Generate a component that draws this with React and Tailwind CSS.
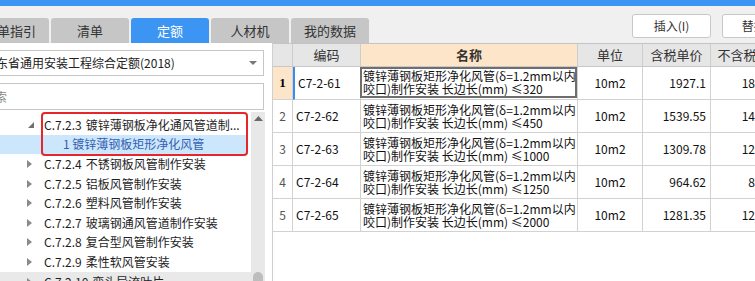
const TABS = [
  { id: 'guide', label: '清单指引' },
  { id: 'list', label: '清单' },
  { id: 'quota', label: '定额', active: true },
  { id: 'rcj', label: '人材机' },
  { id: 'mine', label: '我的数据' },
]

const TREE = [
  { code: 'C.7.2.3', name: '镀锌薄钢板净化通风管道制...', open: true },
  { child: true, name: '1 镀锌薄钢板矩形净化风管', selected: true },
  { code: 'C.7.2.4', name: '不锈钢板风管制作安装' },
  { code: 'C.7.2.5', name: '铝板风管制作安装' },
  { code: 'C.7.2.6', name: '塑料风管制作安装' },
  { code: 'C.7.2.7', name: '玻璃钢通风管道制作安装' },
  { code: 'C.7.2.8', name: '复合型风管制作安装' },
  { code: 'C.7.2.9', name: '柔性软风管安装' },
  { code: 'C.7.2.10', name: '弯头导流叶片', hover: true },
]

const ROWS = [
  { no: 1, code: 'C7-2-61', len: '≤320', unit: '10m2', price: '1927.1', net: '1847.25' },
  { no: 2, code: 'C7-2-62', len: '≤450', unit: '10m2', price: '1539.55', net: '1470.46' },
  { no: 3, code: 'C7-2-63', len: '≤1000', unit: '10m2', price: '1309.78', net: '1249.50' },
  { no: 4, code: 'C7-2-64', len: '≤1250', unit: '10m2', price: '964.62', net: '894.55' },
  { no: 5, code: 'C7-2-65', len: '≤2000', unit: '10m2', price: '1281.35', net: '1219.48' },
]

const COLS = 'grid grid-cols-[20px_68px_217px_65px_68px_78px] w-[516px]'

function Caret({ open }) {
  if (open) {
    return (
      <svg width="6" height="6" viewBox="0 0 6 6" className="ml-[28px] mr-[10px]">
        <polygon points="6,0 6,6 0,6" fill="#6f6f6f" />
      </svg>
    )
  }
  return (
    <svg width="5" height="8" viewBox="0 0 5 8" className="ml-[27px] mr-[12px]">
      <polygon points="0,0 5,4 0,8" fill="#8a8a8a" />
    </svg>
  )
}

function TreeRow({ item }) {
  if (item.child) {
    return (
      <div className="h-[19.6px] w-[248px] flex items-center bg-[#cce6fb] text-[#3260b3] pl-[63px] whitespace-nowrap">
        {item.name}
      </div>
    )
  }
  return (
    <div className={`h-[19.6px] flex items-center whitespace-nowrap text-[#1e1e1e] ${item.hover ? 'bg-[#e9e9e9]' : ''}`}>
      <Caret open={item.open} />
      <span>{item.code}</span>
      <span className="ml-[4px]">{item.name}</span>
    </div>
  )
}

function NameText({ len }) {
  return (
    <>
      <span className="h-[13px] flex items-center">镀锌薄钢板矩形净化风管(δ=1.2mm以内</span>
      <span className="h-[13px] flex items-center">咬口)制作安装 长边长(mm) {len}</span>
    </>
  )
}

export default function App() {
  return (
    <div className="w-[755px] h-[281px] overflow-hidden bg-white font-['Noto_Sans_CJK_SC',sans-serif] text-[12px]">
      {/* title strip */}
      <div className="h-[6px] bg-[#3d95f3]" />

      {/* tabs + toolbar */}
      <div className="h-[37px] bg-[#f0f0f0] flex overflow-hidden whitespace-nowrap">
        <div className="flex items-end gap-[2px] -ml-[29px] shrink-0">
          {TABS.map((t) => (
            <div
              key={t.id}
              className={`w-[78px] h-[25px] rounded-t-[3px] flex items-center justify-center text-[13px] ${t.active ? 'bg-[#3d95f3] text-white' : 'bg-[#c6c6c6] text-[#333]'}`}
            >
              {t.label}
            </div>
          ))}
        </div>
        <div className="flex gap-[11px] ml-[263px] mt-[8px] shrink-0">
          <button className="w-[79px] h-[24px] bg-white border border-[#c8c8c8] rounded-[3px] text-[#333] text-[12px]">
            插入(I)
          </button>
          <button className="w-[79px] h-[24px] bg-white border border-[#c8c8c8] rounded-[3px] text-[#333] text-[12px]">
            替换(R)
          </button>
        </div>
      </div>

      <div className="flex h-[238px]">
        {/* left: quota library tree */}
        <div className="w-[273px] shrink-0 border-r border-[#cfcfcf] overflow-hidden flex flex-col">
          <div className="pr-[8px] pt-[7px]">
            <div className="-ml-[30px] h-[26px] border border-[#c6c6c6] flex items-center pl-[13px] pr-[6px] whitespace-nowrap">
              <span className="text-[#222]">广东省通用安装工程综合定额(2018)</span>
              <svg width="8" height="4" viewBox="0 0 8 4" className="ml-auto">
                <polygon points="0,0 8,0 4,4" fill="#777" />
              </svg>
            </div>
            <div className="-ml-[30px] mt-[7px] h-[27px] border border-[#c6c6c6] flex items-center pl-[12px] text-[#888]">
              搜索
            </div>
          </div>

          <div className="flex flex-1 mt-[2px] min-h-0">
            <div className="relative w-[251px] pt-[3px]">
              {TREE.map((item, i) => (
                <TreeRow key={i} item={item} />
              ))}
              <div className="absolute left-[41px] top-0 w-[207px] h-[44px] border-2 border-[#e5262a] rounded-[4px]" />
            </div>
            <div className="w-[14px] bg-[#e8e8e8] flex flex-col items-center">
              <svg width="9" height="5" viewBox="0 0 9 5" className="mt-[4px]">
                <polygon points="0,5 9,5 4.5,0" fill="#6a6a6a" />
              </svg>
              <div className="mt-auto w-[10px] h-[10px] rounded-t-full bg-[#bdbdbd] -mb-[1px]" />
            </div>
          </div>
        </div>

        {/* right: quota table */}
        <div className="flex-1 overflow-hidden border-t border-[#c4c4c4]">
          <div className={`${COLS} h-[23px] bg-[#e6e6e6] border-b border-[#c8c8c8] text-[13px] text-[#333] whitespace-nowrap`}>
            <div className="border-r border-[#cdcdcd]" />
            <div className="border-r border-[#cdcdcd] flex items-center justify-center">编码</div>
            <div className="border-r border-[#cdcdcd] bg-[#fde5c9] flex items-center justify-center font-bold">名称</div>
            <div className="border-r border-[#cdcdcd] flex items-center justify-center">单位</div>
            <div className="border-r border-[#cdcdcd] flex items-center justify-center">含税单价</div>
            <div className="flex items-center justify-center">不含税单价</div>
          </div>

          <div className="text-[#111]">
            {ROWS.map((r) => {
              const first = r.no === 1
              return (
                <div key={r.no} className={`${COLS} h-[33px] whitespace-nowrap`}>
                  <div className={`border-r border-b border-[#d2d2d2] flex items-center justify-center ${first ? 'bg-[#fde5c9] font-["Liberation_Serif",serif] font-bold text-[13px] text-black' : 'text-[#555]'}`}>
                    {r.no}
                  </div>
                  <div className={`border-r border-b border-[#d2d2d2] flex items-center pl-[3px] ${first ? 'border-l-2 border-l-[#3b8cf0] pl-[1px]' : ''}`}>
                    {r.code}
                  </div>
                  <div className="relative border-r border-b border-[#d2d2d2] flex flex-col justify-center pl-[2px]">
                    {first ? (
                      <div className="absolute left-[-1px] right-0 top-0 h-[31px] border-2 border-[#6e6e6e] bg-white pl-[1px] flex flex-col justify-center">
                        <NameText len={r.len} />
                      </div>
                    ) : (
                      <NameText len={r.len} />
                    )}
                  </div>
                  <div className="border-r border-b border-[#d2d2d2] flex items-center justify-center">{r.unit}</div>
                  <div className="border-r border-b border-[#d2d2d2] flex items-center justify-end pr-[4px]">{r.price}</div>
                  <div className="border-b border-[#d2d2d2] flex items-center justify-end pr-[4px]">{r.net}</div>
                </div>
              )
            })}
          </div>
        </div>
      </div>
    </div>
  )
}
